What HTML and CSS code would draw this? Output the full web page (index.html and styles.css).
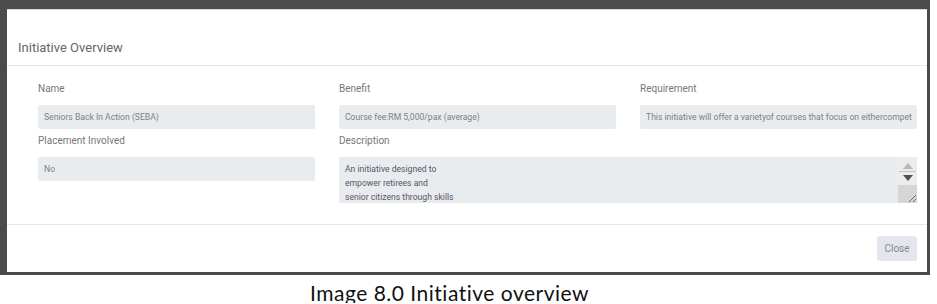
FILE: index.html
```html
<!DOCTYPE html>
<html lang="en">

<head>
    <meta charset="UTF-8">
    <meta name="viewport" content="width=device-width, initial-scale=1.0">
    <title>Initiative Overview</title>
    <link rel="stylesheet" href="styles.css">
</head>

<body>
    <div class="backdrop">
        <div class="modal">
            <div class="modal-header">Initiative Overview</div>

            <div class="modal-body">
                <div class="field">
                    <div class="label">Name</div>
                    <div class="input">Seniors Back In Action (SEBA)</div>
                </div>
                <div class="field">
                    <div class="label">Benefit</div>
                    <div class="input">Course fee:RM 5,000/pax (average)</div>
                </div>
                <div class="field">
                    <div class="label">Requirement</div>
                    <div class="input">This initiative will offer a varietyof courses that focus on eithercompet</div>
                </div>
                <div class="field">
                    <div class="label">Placement Involved</div>
                    <div class="input">No</div>
                </div>
                <div class="field wide">
                    <div class="label">Description</div>
                    <div class="textarea">
                        <div class="textarea-text">
                            An initiative designed to<br>
                            empower retirees and<br>
                            senior citizens through skills
                        </div>
                        <div class="scrollbar">
                            <div class="arrow">
                                <svg width="10" height="6" viewBox="0 0 10 6"><polygon points="5,0 10,6 0,6" fill="#b8b8b8"/></svg>
                            </div>
                            <div class="arrow-line"></div>
                            <div class="arrow">
                                <svg width="10" height="6" viewBox="0 0 10 6"><polygon points="0,0 10,0 5,6" fill="#505050"/></svg>
                            </div>
                            <div class="resizer">
                                <svg width="10" height="10" viewBox="0 0 10 10">
                                    <line x1="9" y1="2" x2="2" y2="9" stroke="#6a6a6a" stroke-width="1"/>
                                    <line x1="9" y1="6" x2="6" y2="9" stroke="#6a6a6a" stroke-width="1"/>
                                </svg>
                            </div>
                        </div>
                    </div>
                </div>
            </div>

            <div class="modal-footer">
                <button class="close-btn">Close</button>
            </div>
        </div>
    </div>

    <div class="caption">Image 8.0 Initiative overview</div>
</body>

</html>
```

FILE: styles.css
```css
body {
    margin: 0;
    background-color: white;
    font-family: Roboto, "Noto Sans", sans-serif;
}

.backdrop {
    width: 920px;
    background-color: #4b4b4b;
    padding: 9px 3px 3px 7px;
}

.modal {
    background-color: white;
    border-top: 1px solid #d8d8d8;
    height: 262px;
    display: flex;
    flex-direction: column;
}

.modal-header {
    height: 56px;
    box-sizing: border-box;
    padding: 28px 11px 0;
    font-size: 13px;
    line-height: 20px;
    color: #666;
    border-bottom: 1px solid #e6e6e6;
}

.modal-body {
    display: grid;
    grid-template-columns: repeat(3, 277px);
    column-gap: 24px;
    padding: 15px 10px 21px 31px;
    border-bottom: 1px solid #e6e6e6;
}

.field.wide {
    grid-column: span 2;
}

.label {
    font-size: 10px;
    line-height: 16px;
    height: 16px;
    margin-bottom: 8px;
    color: #777;
}

.input {
    height: 24px;
    line-height: 24px;
    margin-bottom: 4px;
    padding: 0 6px;
    background-color: #e9ecef;
    border-radius: 2px;
    font-size: 8.6px;
    color: #7a7f86;
    white-space: nowrap;
    overflow: hidden;
}

.textarea {
    height: 46px;
    display: flex;
    background-color: #e9ecef;
    border-radius: 2px;
}

.textarea-text {
    flex: 1;
    padding: 5px 6px 0;
    font-size: 8.6px;
    line-height: 14px;
    color: #5b5366;
    overflow: hidden;
}

.scrollbar {
    width: 19px;
    display: flex;
    flex-direction: column;
    align-items: center;
    background-color: #ececec;
}

.arrow {
    height: 7px;
    display: flex;
    align-items: center;
    justify-content: center;
    margin-top: 5px;
}

.arrow-line {
    width: 17px;
    height: 1px;
    margin-top: 2px;
    background-color: #c4c4c4;
}

.arrow + .arrow-line + .arrow {
    margin-top: 2px;
}

.resizer {
    margin-top: auto;
    width: 19px;
    height: 18px;
    background-color: #d6d6d6;
    display: flex;
    align-items: flex-end;
    justify-content: flex-end;
}

.modal-footer {
    flex: 1;
    display: flex;
    justify-content: flex-end;
    align-items: center;
    padding: 0 10px;
}

.close-btn {
    width: 40px;
    height: 25px;
    padding: 0;
    border: none;
    border-radius: 3px;
    background-color: #e3e6ef;
    color: #888;
    font-family: Roboto, "Noto Sans", sans-serif;
    font-size: 10px;
}

.caption {
    padding-left: 310px;
    margin-top: 8px;
    font-family: Lato, "Open Sans", sans-serif;
    font-size: 21px;
    letter-spacing: 0.5px;
    line-height: 20px;
    color: #111;
}
```
